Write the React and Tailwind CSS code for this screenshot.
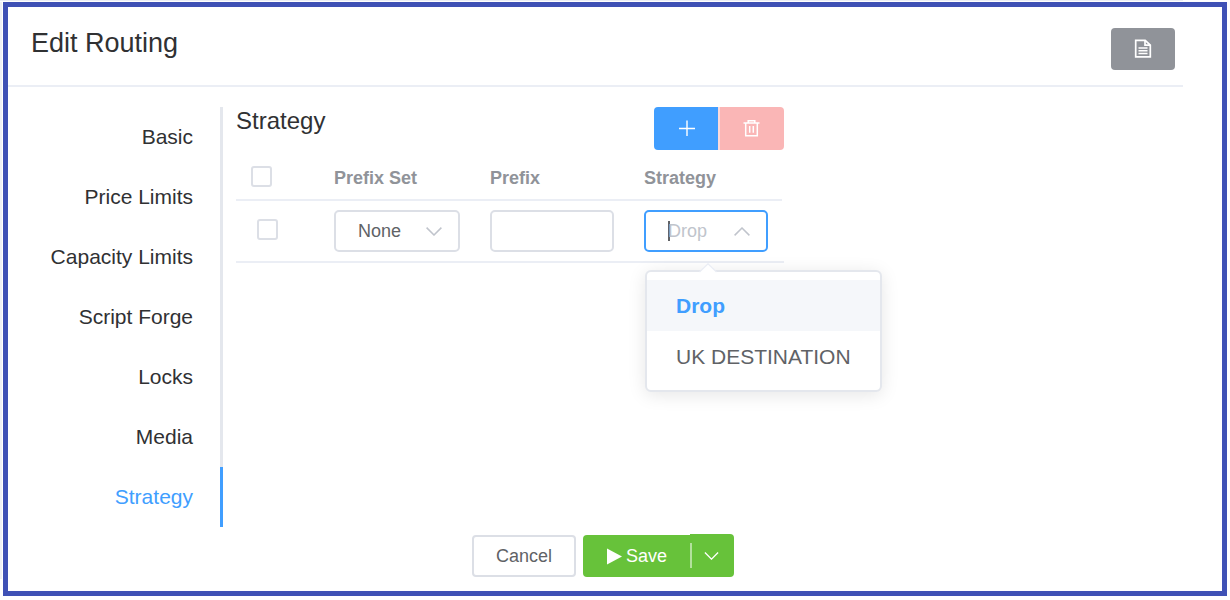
import React from 'react';

const NAV = ['Basic', 'Price Limits', 'Capacity Limits', 'Script Forge', 'Locks', 'Media', 'Strategy'];

function Chevron({ className = '', up = false, width = 16, height = 9, strokeWidth = 1.5 }) {
  return (
    <svg className={className} width={width} height={height} viewBox="0 0 16 9" fill="none" stroke="currentColor" strokeWidth={strokeWidth}>
      <path d={up ? 'M0.6 8.4 L8 1 L15.4 8.4' : 'M0.6 0.6 L8 8 L15.4 0.6'} />
    </svg>
  );
}

function Checkbox({ className = '' }) {
  return <span className={`block size-[21px] rounded-[3px] border-2 border-[#dcdfe6] bg-white ${className}`} />;
}

function Header() {
  return (
    <header className="flex h-20 w-[1175px] items-start justify-between border-b-2 border-[#ebeef5] pl-[23px] pr-2">
      <h1 className="mt-4 text-[27px] leading-[40px]">Edit Routing</h1>
      <button className="mt-[21px] flex h-[42px] w-16 items-center justify-center rounded bg-[#909399] text-white">
        <svg width="18" height="20" viewBox="0 0 18 20" fill="none" stroke="currentColor" strokeWidth="1.7">
          <path d="M1.7 1.3 H11.2 L16.3 6 V17.9 H1.7 Z" />
          <path d="M11 1.3 V6.2 H16.3" />
          <path d="M4.5 9 H13.5 M4.5 11.8 H13.5 M4.5 14.5 H13.5" strokeWidth="1.5" />
        </svg>
      </button>
    </header>
  );
}

function SideNav() {
  return (
    <nav className="w-[215px] text-right text-[21px]">
      {NAV.map((label) => (
        <div
          key={label}
          className={`h-[60px] border-r-3 pr-[27px] leading-[60px] ${
            label === 'Strategy' ? 'border-[#409eff] text-[#409eff]' : 'border-[#e4e7ed]'
          }`}
        >
          {label}
        </div>
      ))}
    </nav>
  );
}

function StrategyMenu() {
  return (
    <div className="absolute left-px top-[60px] z-10 h-[122px] w-[237px] rounded-md border-2 border-[#e4e7ed] bg-white pt-2 text-[21px] text-[#606266] shadow-[0_3px_18px_rgba(0,0,0,0.1)]">
      <svg className="absolute left-[52px] top-[-9px]" width="18" height="10" viewBox="0 0 18 10">
        <path d="M0 10 L9 1 L18 10 Z" fill="white" />
        <path d="M0.5 9 L9 0.8 L17.5 9" fill="none" stroke="#ebeef5" strokeWidth="1.3" />
      </svg>
      <div className="h-[51px] bg-[#f5f7fa] pl-[29px] font-bold leading-[51px] text-[#409eff]">Drop</div>
      <div className="h-[51px] whitespace-nowrap pl-[29px] leading-[51px]">UK DESTINATION</div>
    </div>
  );
}

function StrategyPanel() {
  return (
    <section className="ml-[13px] w-[548px]">
      <div className="flex h-[49px] items-start justify-between">
        <h2 className="mt-[-2px] text-[24px] leading-[32px]">Strategy</h2>
        <div className="flex h-[43px] overflow-hidden rounded text-white">
          <button className="flex w-16 items-center justify-center bg-[#409eff]">
            <svg className="mb-px ml-[2px]" width="16" height="16" viewBox="0 0 16 16" stroke="currentColor" strokeWidth="1.4">
              <path d="M0 8.5 H16 M8 0.5 V16" />
            </svg>
          </button>
          <button className="flex w-[66px] items-start border-l-2 border-[#fcdada] bg-[#fab6b6] pl-[23px] pt-3">
            <svg width="17" height="18" viewBox="0 0 17 18" fill="none" stroke="currentColor" strokeWidth="1.5">
              <path d="M0.5 4 H16.5 M2.7 4 V16.8 H14.3 V4 M5.2 4 V1.7 H11.8 V4 M6.7 7 V13.8 M10.3 7 V13.8" />
            </svg>
          </button>
        </div>
      </div>
      <div className="grid h-[45px] w-[546px] grid-cols-[98px_156px_154px_1fr] items-start border-b-2 border-[#ebeef5] text-[18px] font-bold leading-[45px] text-[#909399]">
        <Checkbox className="ml-[15px] mt-[10px]" />
        <span>Prefix Set</span>
        <span>Prefix</span>
        <span>Strategy</span>
      </div>
      <div className="grid h-[62px] grid-cols-[98px_156px_154px_1fr] items-start border-b-2 border-[#ebeef5] pt-[9px] text-[18px] text-[#606266]">
        <Checkbox className="ml-[21px] mt-[9px]" />
        <div className="flex h-[42px] w-[126px] items-center justify-between rounded-[5px] border-2 border-[#dcdfe6] pl-[22px] pr-4">
          <span>None</span>
          <Chevron className="mt-px text-[#c0c4cc]" />
        </div>
        <div className="h-[42px] w-[124px] rounded-[5px] border-2 border-[#dcdfe6]" />
        <div className="relative flex h-[42px] w-[124px] items-center justify-between rounded-[5px] border-2 border-[#409eff] pl-[22px] pr-4">
          <span className="flex items-center text-[#c0c4cc]">
            <span className="h-5 w-[2px] bg-[#606266]" />
            <span className="ml-[-2px]">Drop</span>
          </span>
          <Chevron up className="text-[#c0c4cc]" />
          <div className="absolute left-[-2px] top-[-2px]">
            <StrategyMenu />
          </div>
        </div>
      </div>
    </section>
  );
}

function Footer() {
  return (
    <footer className="mt-[7px] flex h-[43px] items-end pl-[464px] text-[18px]">
      <button className="h-[42px] w-[104px] rounded border-2 border-[#dcdfe6] text-[#606266]">Cancel</button>
      <div className="ml-[7px] flex items-end text-white">
        <button className="flex h-[42px] w-[107px] items-center rounded-l bg-[#67c23a] pl-6">
          <svg width="15" height="17" viewBox="0 0 15 17" fill="currentColor">
            <path d="M0 0.5 L15 8.5 L0 16.5 Z" />
          </svg>
          <span className="ml-1">Save</span>
        </button>
        <button className="flex h-[43px] w-11 items-center rounded-r bg-[#67c23a]">
          <span className="h-[25px] w-[2px] bg-[#b3e19d]" />
          <Chevron className="ml-3" width={15} height={8} />
        </button>
      </div>
    </footer>
  );
}

export default function App() {
  return (
    <div className="h-[600px] w-[1230px] overflow-hidden bg-white font-['Liberation_Sans',Arial,sans-serif] text-[#303133]">
      <div className="h-px w-[1183px] bg-[#ebeef5]" />
      <div className="flex pt-px">
        <div className="mr-px h-[577px] w-[2px] bg-[#f0f1f5]" />
        <main className="h-[594px] w-[1224px] border-5 border-[#3f51b5] bg-white">
          <Header />
          <div className="flex pt-5">
            <SideNav />
            <StrategyPanel />
          </div>
          <Footer />
        </main>
      </div>
    </div>
  );
}
